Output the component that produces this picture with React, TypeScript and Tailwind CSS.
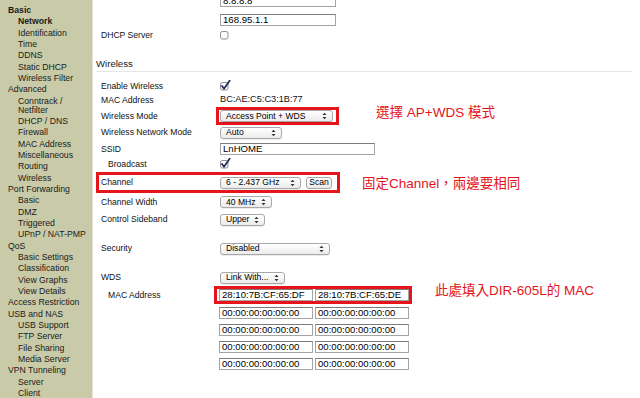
import React from "react";

type NavItem = { t: React.ReactNode; sub?: boolean; b?: boolean };

const nav: NavItem[] = [
  { t: "Basic", b: true },
  { t: "Network", sub: true, b: true },
  { t: "Identification", sub: true },
  { t: "Time", sub: true },
  { t: "DDNS", sub: true },
  { t: "Static DHCP", sub: true },
  { t: "Wireless Filter", sub: true },
  { t: "Advanced" },
  {
    t: (
      <>
        Conntrack /<br />
        Netfilter
      </>
    ),
    sub: true,
  },
  { t: "DHCP / DNS", sub: true },
  { t: "Firewall", sub: true },
  { t: "MAC Address", sub: true },
  { t: "Miscellaneous", sub: true },
  { t: "Routing", sub: true },
  { t: "Wireless", sub: true },
  { t: "Port Forwarding" },
  { t: "Basic", sub: true },
  { t: "DMZ", sub: true },
  { t: "Triggered", sub: true },
  { t: "UPnP / NAT-PMP", sub: true },
  { t: "QoS" },
  { t: "Basic Settings", sub: true },
  { t: "Classification", sub: true },
  { t: "View Graphs", sub: true },
  { t: "View Details", sub: true },
  { t: "Access Restriction" },
  { t: "USB and NAS" },
  { t: "USB Support", sub: true },
  { t: "FTP Server", sub: true },
  { t: "File Sharing", sub: true },
  { t: "Media Server", sub: true },
  { t: "VPN Tunneling" },
  { t: "Server", sub: true },
  { t: "Client", sub: true },
];

function Arrows() {
  return (
    <svg width="5" height="8" viewBox="0 0 5 8" className="shrink-0">
      <path d="M0.5 3 L2.5 0.8 L4.5 3 Z" fill="#333" />
      <path d="M0.5 5 L2.5 7.2 L4.5 5 Z" fill="#333" />
    </svg>
  );
}

function Select({ w, text }: { w: string; text: string }) {
  return (
    <div
      className={`${w} h-[12px] shrink-0 rounded-[3px] border border-[#a8a8a8] bg-gradient-to-b from-white to-[#ececec] flex items-center justify-between pl-[5px] pr-[5px] text-[8.6px] leading-none text-black shadow-[0_0.5px_0_rgba(0,0,0,0.15)]`}
    >
      <span className="whitespace-nowrap">{text}</span>
      <Arrows />
    </div>
  );
}

function Input({ w, text }: { w: string; text: string }) {
  return (
    <div
      className={`${w} h-[12px] shrink-0 border border-[#a4a4a4] border-t-[#7c7c7c] bg-white flex items-center pl-[2px] text-[9.6px] leading-none text-black whitespace-nowrap overflow-hidden`}
    >
      {text}
    </div>
  );
}

function Check({ on }: { on?: boolean }) {
  if (!on) {
    return (
      <svg width="9" height="9" viewBox="0 0 9 9" className="shrink-0">
        <rect x="0.5" y="0.5" width="7.5" height="7.5" rx="1.8" fill="#fbfbfb" stroke="#8d8d8d" />
      </svg>
    );
  }
  return (
    <svg width="11" height="11" viewBox="0 0 11 11" className="shrink-0 -mt-[2px]">
      <rect x="0.5" y="2.5" width="7.5" height="7.5" rx="1.8" fill="#fbfbfb" stroke="#8d8d8d" />
      <path d="M2 6 L4 8.8 L9.8 0.4" fill="none" stroke="#1d2d5e" strokeWidth="1.7" strokeLinecap="round" strokeLinejoin="round" />
    </svg>
  );
}

function Label({ children, sub }: { children: React.ReactNode; sub?: boolean }) {
  return (
    <div
      className={`${sub ? "pl-[15px] w-[127px]" : "pl-[8px] w-[127px]"} shrink-0 text-[8.6px] leading-none text-[#111] whitespace-nowrap`}
    >
      {children}
    </div>
  );
}

function Note({ children, cls }: { children: React.ReactNode; cls: string }) {
  return (
    <div
      className={`${cls} text-[13.5px] leading-none text-[#e3141c] whitespace-nowrap font-['Liberation_Sans','Noto_Sans_CJK_TC',sans-serif]`}
    >
      {children}
    </div>
  );
}

export default function App() {
  return (
    <div className="flex w-[640px] h-[398px] overflow-hidden bg-white font-['Liberation_Sans',Arial,sans-serif]">
      <nav className="w-[93px] shrink-0 bg-[#c9cba8] border-r border-[#e4e5d4] pt-[6px] text-[8.7px] leading-[9px] text-[#1a1a1a]">
        {nav.map((n, i) => (
          <div
            key={i}
            className={`${n.sub ? "pl-[18px]" : "pl-[8px]"} ${n.b ? "font-bold" : ""} pb-[2.33px] whitespace-nowrap`}
          >
            {n.t}
          </div>
        ))}
      </nav>

      <main className="flex-1 flex flex-col -mt-[10px]">
        {/* DNS rows */}
        <div className="h-[22px] flex items-center shrink-0">
          <div className="w-[127px] shrink-0" />
          <Input w="w-[116px]" text="8.8.8.8" />
        </div>
        <div className="h-[16px] flex items-center shrink-0">
          <div className="w-[127px] shrink-0" />
          <Input w="w-[116px]" text="168.95.1.1" />
        </div>
        <div className="h-[14px] flex items-center shrink-0">
          <Label>DHCP Server</Label>
          <Check />
        </div>

        {/* Wireless heading */}
        <div className="mt-[14px] h-[16px] ml-[3px] mr-[8px] flex items-center border-b border-[#e6e6e6] text-[9.6px] leading-none text-[#222] shrink-0">
          Wireless
        </div>

        <div className="mt-[7px] h-[14px] flex items-center shrink-0">
          <Label>Enable Wireless</Label>
          <Check on />
        </div>
        <div className="h-[14px] flex items-center shrink-0">
          <Label>MAC Address</Label>
          <div className="text-[9.2px] leading-none text-[#111]">BC:AE:C5:C3:1B:77</div>
        </div>
        <div className="h-[18px] flex items-center shrink-0">
          <Label>Wireless Mode</Label>
          <div className="-ml-[4px] h-[18px] border-[3px] border-[#e8141b] pl-[1px] pr-[3px] flex items-center">
            <Select w="w-[113px]" text="Access Point + WDS" />
          </div>
          <Note cls="ml-[37px] mb-[6px]">選擇 AP+WDS 模式</Note>
        </div>
        <div className="h-[15px] flex items-center shrink-0">
          <Label>Wireless Network Mode</Label>
          <Select w="w-[62px]" text="Auto" />
        </div>
        <div className="h-[18px] flex items-center shrink-0">
          <Label>SSID</Label>
          <Input w="w-[155px]" text="LnHOME" />
        </div>
        <div className="h-[13px] flex items-center shrink-0">
          <Label sub>Broadcast</Label>
          <Check on />
        </div>

        <div className="mt-[1px] h-[21px] flex items-center shrink-0">
          <div className="ml-[3px] h-[21px] border-[3px] border-[#e8141b] flex items-center pr-[5px]">
            <div className="pl-[2px] w-[121px] shrink-0 text-[8.6px] leading-none text-[#111]">Channel</div>
            <Select w="w-[81px]" text="6 - 2.437 GHz" />
            <div className="ml-[5px] w-[26px] h-[12px] rounded-[3px] border border-[#a8a8a8] bg-gradient-to-b from-white to-[#ececec] flex items-center justify-center text-[8.6px] leading-none text-black">
              Scan
            </div>
          </div>
          <Note cls="ml-[22px] -mb-[2px]">固定Channel，兩邊要相同</Note>
        </div>

        <div className="h-[18px] flex items-center shrink-0">
          <Label>Channel Width</Label>
          <Select w="w-[52px]" text="40 MHz" />
        </div>
        <div className="h-[17px] flex items-center shrink-0">
          <Label>Control Sideband</Label>
          <Select w="w-[45px]" text="Upper" />
        </div>

        <div className="mt-[11px] h-[19px] flex items-center shrink-0">
          <Label>Security</Label>
          <Select w="w-[110px]" text="Disabled" />
        </div>

        <div className="mt-[11px] h-[17px] flex items-center shrink-0">
          <Label>WDS</Label>
          <Select w="w-[65px]" text="Link With..." />
        </div>
        <div className="h-[18px] flex items-center shrink-0">
          <Label sub>MAC Address</Label>
          <div className="-ml-[6px] h-[18px] border-[3px] border-[#e8141b] pl-[2px] flex items-center gap-[2px]">
            <Input w="w-[94px]" text="28:10:7B:CF:65:DF" />
            <Input w="w-[94px]" text="28:10:7B:CF:65:DE" />
          </div>
          <Note cls="ml-[23px] mb-[8px]">此處填入DIR-605L的 MAC</Note>
        </div>
        {[0, 1, 2, 3].map((i) => (
          <div key={i} className="h-[17px] flex items-center shrink-0">
            <div className="w-[127px] shrink-0" />
            <div className="-ml-[1px] flex gap-[2px]">
              <Input w="w-[94px]" text="00:00:00:00:00:00" />
              <Input w="w-[94px]" text="00:00:00:00:00:00" />
            </div>
          </div>
        ))}
      </main>
    </div>
  );
}
